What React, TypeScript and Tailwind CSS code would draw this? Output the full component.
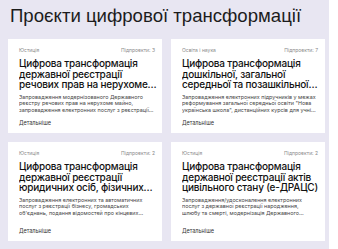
import React from "react";

type Project = {
  category: string;
  count: number;
  title: string;
  desc: string;
};

const projects: Project[] = [
  {
    category: "Юстиція",
    count: 3,
    title: "Цифрова трансформація державної реєстрації речових прав на нерухоме майно",
    desc: "Запровадження модернізованого Державного реєстру речових прав на нерухоме майно, запровадження електронних послуг з реєстрації прав та обтяжень",
  },
  {
    category: "Освіта і наука",
    count: 7,
    title: "Цифрова трансформація дошкільної, загальної середньої та позашкільної освіти",
    desc: "Запровадження електронних підручників у межах реформування загальної середньої освіти \"Нова українська школа\", дистанційних курсів для учнів та вчителів",
  },
  {
    category: "Юстиція",
    count: 2,
    title: "Цифрова трансформація державної реєстрації юридичних осіб, фізичних осіб-підприємців",
    desc: "Запровадження електронних та автоматичних послуг з реєстрації бізнесу, громадських об'єднань, подання відомостей про кінцевих бенефіціарних власників",
  },
  {
    category: "Юстиція",
    count: 2,
    title: "Цифрова трансформація державної реєстрації актів цивільного стану (е-ДРАЦС)",
    desc: "Запровадження/удосконалення електронних послуг з державної реєстрації народження, шлюбу та смерті, модернізація Державного реєстру актів цивільного стану",
  },
];

function Card({ p }: { p: Project }) {
  return (
    <div className="flex flex-col bg-white pl-[11px] pr-[4px] pt-[8px] pb-[7px]">
      <div className="flex justify-between pr-[3px] text-[5px] leading-[6px] text-[#8a8a8a]">
        <span>{p.category}</span>
        <span>Підпроекти: {p.count}</span>
      </div>
      <h3 className="mt-[5px] line-clamp-3 text-[10px] font-medium leading-[10.5px] tracking-[-0.2px] text-[#111]">
        {p.title}
      </h3>
      <p className="mt-[4px] line-clamp-3 pr-[3px] text-[5.4px] leading-[6.6px] text-[#444]">
        {p.desc}
      </p>
      <a className="mt-auto text-[5.5px] leading-[6px] text-[#333]">Детальніше</a>
    </div>
  );
}

export default function App() {
  return (
    <div className="h-[249px] w-[338px] overflow-hidden bg-white" style={{ fontFamily: "Inter, 'Noto Sans', sans-serif" }}>
      <div className="h-full w-[329px] bg-[#e8e6f2] pl-[8px] pr-[4px]">
        <h1
          className="pl-[2px] pt-[4px] text-[18.6px] leading-[24px] text-[#1c1c1c]"
          style={{ fontFamily: "'Liberation Sans', Arial, sans-serif" }}
        >
          Проєкти цифрової трансформації
        </h1>
        <div className="mt-[11px] grid grid-cols-2 grid-rows-[94px_99px] gap-[9px]">
          {projects.map((p, i) => (
            <Card key={i} p={p} />
          ))}
        </div>
      </div>
    </div>
  );
}
